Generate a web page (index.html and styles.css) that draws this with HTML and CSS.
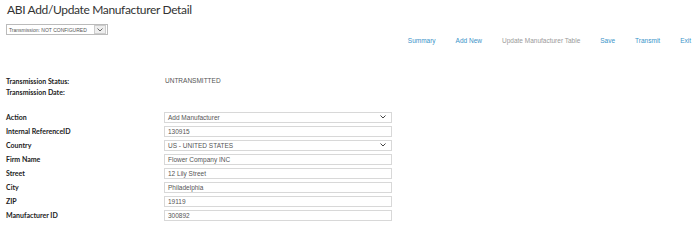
FILE: index.html
```html
<!DOCTYPE html>
<html>
<head>
<meta charset="utf-8">
<link rel="stylesheet" href="styles.css">
</head>
<body>
<div class="page">
  <h1 class="title">ABI Add/Update Manufacturer Detail</h1>
  <div class="trans-select">
    <span class="ts-text">Transmission: NOT CONFIGURED</span>
    <span class="ts-arrow"><svg width="6" height="4" viewBox="0 0 6 4"><path d="M0.5 0.5 L3 3 L5.5 0.5" fill="none" stroke="#666" stroke-width="1"/></svg></span>
  </div>
  <nav class="nav">
    <a class="nav-link">Summary</a>
    <a class="nav-link">Add New</a>
    <a class="nav-link disabled">Update Manufacturer Table</a>
    <a class="nav-link">Save</a>
    <a class="nav-link">Transmit</a>
    <a class="nav-link">Exit</a>
  </nav>
  <div class="status">
    <div class="row"><span class="label">Transmission Status:</span><span class="value">UNTRANSMITTED</span></div>
    <div class="row"><span class="label">Transmission Date:</span><span class="value"></span></div>
  </div>
  <div class="form">
    <div class="row"><span class="label">Action</span><div class="field select"><span>Add Manufacturer</span><svg width="6" height="4" viewBox="0 0 6 4"><path d="M0.5 0.5 L3 3 L5.5 0.5" fill="none" stroke="#444" stroke-width="1"/></svg></div></div>
    <div class="row"><span class="label">Internal ReferenceID</span><div class="field"><span>130915</span></div></div>
    <div class="row"><span class="label">Country</span><div class="field select"><span>US - UNITED STATES</span><svg width="6" height="4" viewBox="0 0 6 4"><path d="M0.5 0.5 L3 3 L5.5 0.5" fill="none" stroke="#444" stroke-width="1"/></svg></div></div>
    <div class="row"><span class="label">Firm Name</span><div class="field"><span>Flower Company INC</span></div></div>
    <div class="row"><span class="label">Street</span><div class="field"><span>12 Lily Street</span></div></div>
    <div class="row"><span class="label">City</span><div class="field"><span>Philadelphia</span></div></div>
    <div class="row"><span class="label">ZIP</span><div class="field"><span>19119</span></div></div>
    <div class="row"><span class="label">Manufacturer ID</span><div class="field"><span>300892</span></div></div>
  </div>
</div>
</body>
</html>
```

FILE: styles.css
```css
* { box-sizing: border-box; }
body { margin: 0; background: #fff; font-family: "Liberation Sans", Arial, sans-serif; color: #333; }
.page { padding: 1px 6px 0 6px; }
.title { margin: 0 0 0 1px; font-family: Lato, sans-serif; font-weight: 400; font-size: 12px; line-height: 17px; color: #333; letter-spacing: -0.35px; }
.trans-select { margin-top: 6px; width: 102px; height: 11px; border: 1px solid #bbb; display: flex; align-items: center; justify-content: space-between; padding-left: 2px; font-size: 5px; color: #555; }
.ts-arrow { width: 12px; height: 9px; margin-right: 1px; border: 1px solid #ccc; background: #eee; display: flex; align-items: center; justify-content: center; }
.nav { display: flex; justify-content: flex-end; margin-top: 1px; padding-right: 0; font-size: 6.5px; line-height: 10px; }
.nav-link { color: #3a93c9; margin-left: 20px; }
.nav-link.disabled { color: #999; }
.status { margin-top: 29px; }
.status .row { display: flex; height: 11px; align-items: center; }
.label { width: 158px; font-family: Lato, sans-serif; font-weight: bold; font-size: 7px; color: #222; }
.value { font-size: 6.5px; color: #555; padding-left: 1px; }
.form { margin-top: 13px; }
.form .row { display: flex; height: 14px; align-items: center; }
.field { width: 228px; height: 11px; border: 1px solid #d8d8d8; display: flex; align-items: center; justify-content: space-between; padding: 0 5px 0 3px; font-size: 6.5px; color: #555; }
```
